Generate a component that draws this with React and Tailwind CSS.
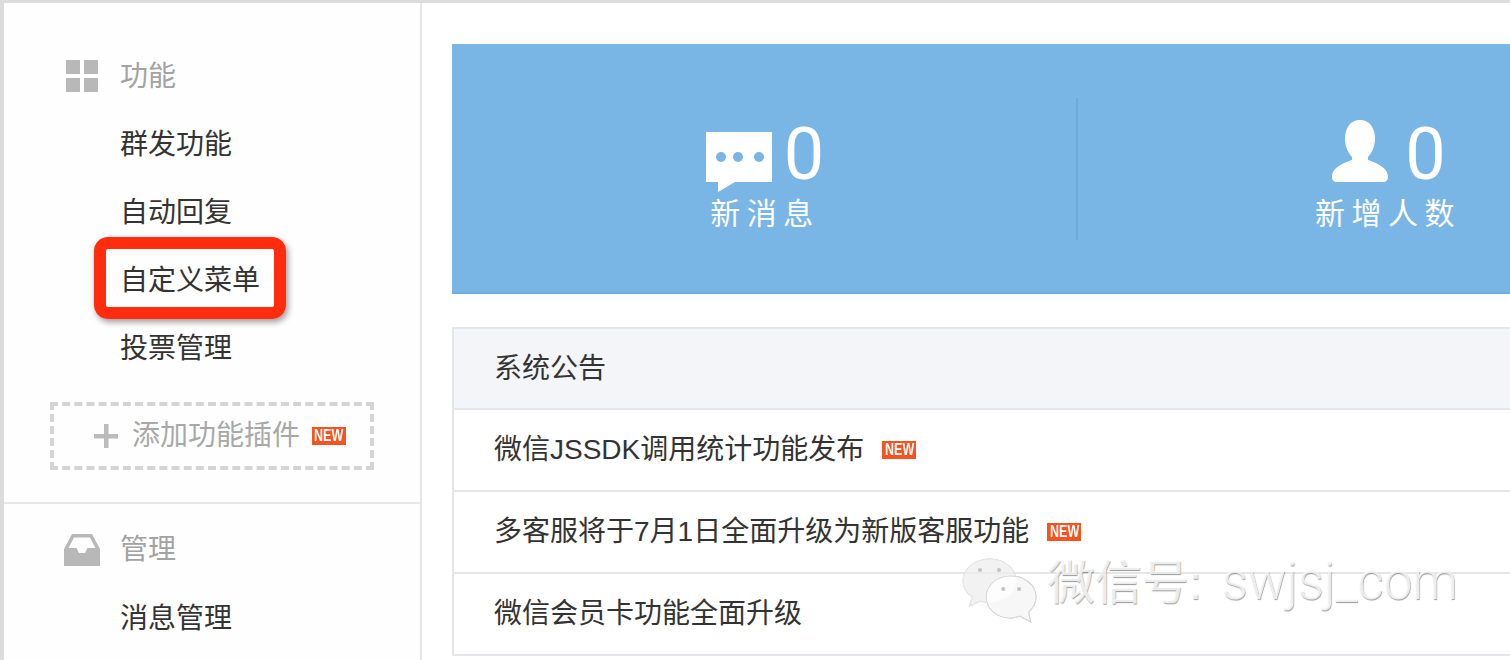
const FONT = "font-['Liberation_Sans','Noto_Sans_CJK_SC',sans-serif]"

function NewBadge({ className = '' }) {
  return (
    <span className={`inline-flex items-center justify-center w-[34px] h-[18px] bg-[#f5531f] text-white text-[16px] leading-none font-bold ${className}`}>
      <span className="inline-block [transform:scale(0.78,1)]">NEW</span>
    </span>
  )
}

function GridIcon() {
  return (
    <svg width="36" height="32" viewBox="0 0 36 32" fill="#b8b8b8" className="mb-[2px]" aria-hidden="true">
      <rect x="2" y="0" width="14" height="14" />
      <rect x="20" y="0" width="14" height="14" />
      <rect x="2" y="18" width="14" height="14" />
      <rect x="20" y="18" width="14" height="14" />
    </svg>
  )
}

function InboxIcon() {
  return (
    <svg width="36" height="32" viewBox="0 0 36 32" fill="#b8b8b8" aria-hidden="true">
      <path d="M8 0H28L36 15V32H0V15ZM10 3.5 4.5 14H12.5L15 19H21L23.5 14H31.5L26 3.5Z" fillRule="evenodd" />
    </svg>
  )
}

function PlusIcon() {
  return (
    <svg width="24" height="24" viewBox="0 0 24 24" fill="#bbbbbb" aria-hidden="true">
      <rect x="10" y="0" width="4.5" height="24" />
      <rect x="0" y="10" width="24" height="4.5" />
    </svg>
  )
}

function ChatIcon() {
  return (
    <svg width="66" height="60" viewBox="0 0 66 60" className="mt-[13px]" aria-hidden="true">
      <path d="M0 0H66V50H29L12 60V50H0Z" fill="#fff" />
      <circle cx="15" cy="25" r="5" fill="#79b6e6" />
      <circle cx="32" cy="25" r="5" fill="#79b6e6" />
      <circle cx="53" cy="25" r="5" fill="#79b6e6" />
    </svg>
  )
}

function PersonIcon() {
  return (
    <svg width="56" height="62" viewBox="0 0 56 62" fill="#fff" className="mb-[9px]" aria-hidden="true">
      <path d="M28 0C38 0 43 8 43 19C43 27 39 34 36 37V40C44 43 56 47 56 57C56 60 54 62 51 62H5C2 62 0 60 0 57C0 47 12 43 20 40V37C17 34 13 27 13 19C13 8 18 0 28 0Z" />
    </svg>
  )
}

function WechatMark() {
  return (
    <svg
      width="76"
      height="68"
      viewBox="0 0 72 68"
      preserveAspectRatio="none"
      className="absolute left-[957px] top-[553px] drop-shadow-[0.5px_0.5px_0.5px_rgba(0,0,0,0.25)]"
      aria-hidden="true"
    >
      <path d="M27 3C42 3 52 13 52 25C52 37 41 46 28 46C24 46 21 46 18 45L8 50L11 41C5 37 2 31 2 25C2 13 13 3 27 3Z" fill="#fff" fillOpacity="0.7" stroke="#e8e8e8" strokeWidth="1" />
      <circle cx="18" cy="14" r="2" fill="#c4c4c4" />
      <circle cx="36" cy="14" r="2" fill="#c4c4c4" />
      <path d="M47 20C60 20 71 29 71 41C71 47 68 52 64 56L66 66L56 60C53 61 50 62 47 62C34 62 24 53 24 41C24 29 34 20 47 20Z" fill="#fff" fillOpacity="0.85" stroke="#d8d8d8" strokeWidth="1" />
      <circle cx="40" cy="33" r="2" fill="#c4c4c4" />
      <circle cx="55" cy="33" r="2" fill="#c4c4c4" />
    </svg>
  )
}

function SideHeading({ icon, label }) {
  return (
    <div className="flex items-center h-[68px] pl-[60px] text-[#a3a3a3]">
      {icon}
      <span className="ml-[20px]">{label}</span>
    </div>
  )
}

function SideItem({ label }) {
  return <div className="flex items-center h-[68px] pl-[116px] text-[#333]">{label}</div>
}

function Sidebar() {
  return (
    <aside className="w-[418px] shrink-0 border-r-2 border-[#e4e6e8] bg-[#fefefe] text-[28px]">
      <div className="pt-[40px] pb-[32px] border-b-2 border-[#e7e7e7]">
        <SideHeading icon={<GridIcon />} label="功能" />
        <SideItem label="群发功能" />
        <SideItem label="自动回复" />
        <SideItem label="自定义菜单" />
        <SideItem label="投票管理" />
        <div className="flex items-center mt-[19px] ml-[46px] w-[324px] h-[68px] pl-[40px] border-4 border-dashed border-[#d4d4d4] text-[#a8a8a8]">
          <PlusIcon />
          <span className="ml-[14px]">添加功能插件</span>
          <NewBadge className="ml-[12px]" />
        </div>
      </div>
      <div className="pt-[12px]">
        <SideHeading icon={<InboxIcon />} label="管理" />
        <div className="mt-px">
          <SideItem label="消息管理" />
        </div>
      </div>
    </aside>
  )
}

function Stat({ icon, value, label, className = '', rowClass = '' }) {
  return (
    <div className={`flex flex-col items-center justify-center h-[142px] pt-[15px] ${className}`}>
      <div className={`flex items-center h-[72px] ${rowClass}`}>
        {icon}
        <span className="font-['Roboto',sans-serif] font-normal text-[72px] leading-none text-white">{value}</span>
      </div>
      <div className="mt-[3px] text-[30px] leading-[40px] tracking-[6.5px] text-white">{label}</div>
    </div>
  )
}

function NoticeRow({ children, isNew }) {
  return (
    <div className="flex items-center h-[82px] pl-[40px] border-t-2 border-[#e4e6e9] text-[#333]">
      <span>{children}</span>
      {isNew && <NewBadge className="ml-[18px]" />}
    </div>
  )
}

export default function App() {
  return (
    <div className={`relative flex w-[1510px] h-[660px] overflow-hidden bg-white border-t-[3px] border-l-4 border-[#dcdcdc] ${FONT}`}>
      <Sidebar />

      <main className="w-[1240px] shrink-0 pl-[30px] pt-[41px]">
        <section className="flex items-center w-[1240px] h-[250px] pt-[2px] bg-[#79b6e6] border-b-2 border-[#6caedf]">
          <Stat
            icon={<ChatIcon />}
            value="0"
            label="新消息"
            className="w-[626px] pl-[2px] border-r-2 border-[#6ea9d8]"
            rowClass="gap-[12px]"
          />
          <Stat
            icon={<PersonIcon />}
            value="0"
            label="新增人数"
            className="w-[614px] pl-[6px]"
            rowClass="gap-[17px] ml-[2px]"
          />
        </section>

        <section className="mt-[33px] w-[1240px] border-l-2 border-t-2 border-[#e4e6e9] text-[28px]">
          <div className="flex items-center h-[79px] pl-[40px] bg-[#f3f5f9] text-[#333]">系统公告</div>
          <NoticeRow isNew>微信JSSDK调用统计功能发布</NoticeRow>
          <NoticeRow isNew>多客服将于7月1日全面升级为新版客服功能</NoticeRow>
          <NoticeRow>微信会员卡功能全面升级</NoticeRow>
          <div className="border-t-2 border-[#e4e6e9]" />
        </section>
      </main>

      {/* red highlight drawn over the menu item */}
      <div className="absolute left-[90px] top-[234px] w-[192px] h-[82px] rounded-[14px] border-[12px] border-[#ff2d0d] shadow-[2px_3px_6px_rgba(0,0,0,0.4)]" />

      {/* watermark */}
      <WechatMark />
      <div className="absolute left-[1044px] top-[549px] leading-[60px] text-white/80 whitespace-nowrap [text-shadow:0.5px_0.5px_1px_rgba(0,0,0,0.4)]">
        <span className="text-[47px]">微信号:</span>
        <span className="ml-[20px] font-['Roboto',sans-serif] font-light text-[51px]">swjsj_com</span>
      </div>
    </div>
  )
}
